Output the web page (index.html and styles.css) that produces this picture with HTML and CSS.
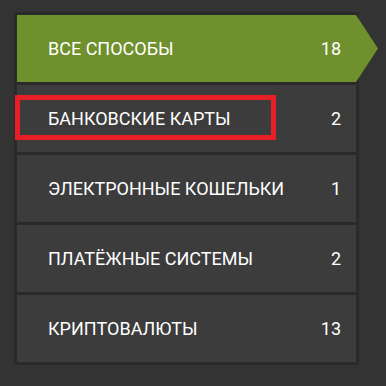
FILE: index.html
```html
<!DOCTYPE html>
<html lang="ru">
<head>
    <meta charset="UTF-8">
    <title>Способы оплаты</title>
    <link rel="stylesheet" href="styles.css">
</head>
<body>
<div class="box">
    <ul class="pay-list">
        <li class="pay-item my-active"><span class="name">ВСЕ СПОСОБЫ</span><span class="count">18</span></li>
        <li class="pay-item marked"><span class="name">БАНКОВСКИЕ КАРТЫ</span><span class="count">2</span></li>
        <li class="pay-item"><span class="name">ЭЛЕКТРОННЫЕ КОШЕЛЬКИ</span><span class="count">1</span></li>
        <li class="pay-item"><span class="name">ПЛАТЁЖНЫЕ СИСТЕМЫ</span><span class="count">2</span></li>
        <li class="pay-item"><span class="name">КРИПТОВАЛЮТЫ</span><span class="count">13</span></li>
    </ul>
</div>
</body>
</html>
```

FILE: styles.css
```css
ul, body, li {
    list-style: none;
    margin: 0;
    padding: 0;
}

body {
    background-color: #333333;
    font-family: Roboto, "Liberation Sans", sans-serif;
}

.box {
    padding: 12px 14px;
}

.pay-list {
    width: 339px;
    padding: 3px;
    background-color: #2a2a2a;
    display: flex;
    flex-direction: column;
    gap: 3px;
}

.pay-item {
    height: 67px;
    padding: 0 15px 0 31px;
    background-color: #3c3c3c;
    color: #ffffff;
    font-size: 18px;
    display: flex;
    align-items: center;
    justify-content: space-between;
    position: relative;
}

.pay-item.my-active {
    background-color: #6e902d;
}

/* стрелка у активного пункта */
.pay-item.my-active::after {
    content: "";
    position: absolute;
    left: 100%;
    top: 0;
    width: 22px;
    height: 100%;
    background-color: #6e902d;
    clip-path: polygon(0 0, 100% 50%, 0 100%);
}

/* красная рамка поверх пункта */
.pay-item.marked::before {
    content: "";
    position: absolute;
    left: -2px;
    top: 10px;
    width: 251px;
    height: 35px;
    border: 5px solid #e81f27;
}
```
